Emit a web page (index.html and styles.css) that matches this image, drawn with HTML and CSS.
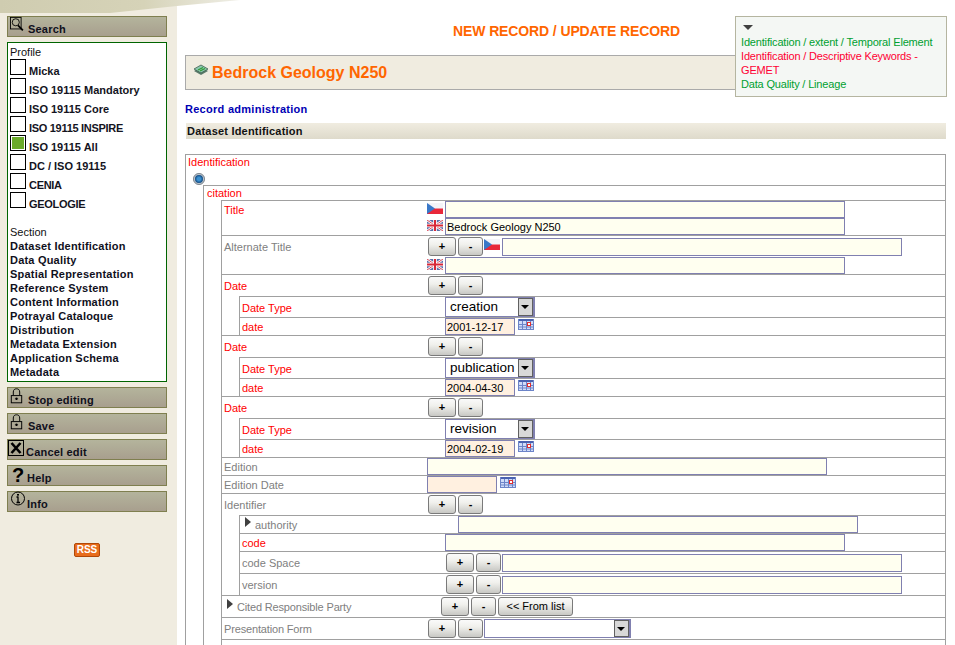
FILE: index.html
```html
<!DOCTYPE html>
<html>
<head>
<meta charset="UTF-8">
<title>Micka - new record</title>
<link rel="stylesheet" href="styles.css">
</head>
<body>

<svg width="0" height="0" class="defs">
	<symbol id="cz" viewBox="0 0 16 11">
		<rect width="16" height="5.5" fill="#f4f4f8"/>
		<rect y="5.5" width="16" height="5.5" fill="#e8283a"/>
		<path d="M0 0L8 5.5L0 11Z" fill="#3a78c8"/>
	</symbol>
	<symbol id="uk" viewBox="0 0 16 11">
		<rect width="16" height="11" fill="#5a6ea8"/>
		<path d="M0 0L16 11M16 0L0 11" stroke="#fff" stroke-width="2.4"/>
		<path d="M0 0L16 11M16 0L0 11" stroke="#d84858" stroke-width="1"/>
		<path d="M8 0V11M0 5.5H16" stroke="#fff" stroke-width="3.6"/>
		<path d="M8 0V11M0 5.5H16" stroke="#d82838" stroke-width="2"/>
	</symbol>
	<symbol id="cal" viewBox="0 0 16 11">
		<rect width="16" height="11" fill="#d0dcf8"/>
		<rect width="16" height="2" fill="#4a62b0"/>
		<path d="M0.5 0V11M4.500 2V11M8.500 2V11M12.500 2V11M15.500 0V11M0 5.500H16M0 8H16M0 10.500H16" stroke="#6c84c8" stroke-width="1" fill="none"/>
		<rect x="9.500" y="3.500" width="3" height="3" fill="#fff" stroke="#e03030"/>
	</symbol>
	<symbol id="lock" viewBox="0 0 16 20">
		<path d="M4 9V5C4 2 6 1 8 1C10 1 12 2 12 5V9" fill="none" stroke="#000" stroke-width="1.200"/>
		<rect x="1.500" y="9.500" width="13" height="9" fill="none" stroke="#000" stroke-width="1.200"/>
		<rect x="7" y="12" width="2" height="3" fill="#000"/>
		<rect x="6" y="13" width="4" height="1" fill="#000"/>
	</symbol>
</svg>

<svg class="banner" width="240" height="14" viewBox="0 0 240 14">
	<defs>
		<linearGradient id="bannerFill" x1="0" y1="0" x2="1" y2="0">
			<stop offset="0" stop-color="#cfccb0"/>
			<stop offset="0.6" stop-color="#d6d3b8"/>
			<stop offset="1" stop-color="#efeee6"/>
		</linearGradient>
	</defs>
	<path d="M0 0H240L177 6L110 13H0Z" fill="url(#bannerFill)"/>
</svg>

<div class="sidebar">
	<a class="side-btn">
		<svg class="icon" width="18" height="17" viewBox="0 0 18 17">
			<rect x="0.5" y="0.5" width="12" height="13" fill="none" stroke="#000"/>
			<circle cx="6.5" cy="6" r="4" fill="none" stroke="#000"/>
			<path d="M9 9.500L14.500 15" stroke="#000" stroke-width="2"/>
		</svg>
		<span>Search</span>
	</a>

	<div class="side-box">
		<div class="side-title">Profile</div>
		<div class="profile"><span class="check"></span>Micka</div>
		<div class="profile"><span class="check"></span>ISO 19115 Mandatory</div>
		<div class="profile"><span class="check"></span>ISO 19115 Core</div>
		<div class="profile caps"><span class="check"></span>ISO 19115 INSPIRE</div>
		<div class="profile"><span class="check checked"></span>ISO 19115 All</div>
		<div class="profile"><span class="check"></span>DC / ISO 19115</div>
		<div class="profile caps"><span class="check"></span>CENIA</div>
		<div class="profile caps"><span class="check"></span>GEOLOGIE</div>

		<div class="side-title section-title">Section</div>
		<a class="section-link">Dataset Identification</a>
		<a class="section-link">Data Quality</a>
		<a class="section-link">Spatial Representation</a>
		<a class="section-link">Reference System</a>
		<a class="section-link">Content Information</a>
		<a class="section-link">Potrayal Cataloque</a>
		<a class="section-link">Distribution</a>
		<a class="section-link">Metadata Extension</a>
		<a class="section-link">Application Schema</a>
		<a class="section-link">Metadata</a>
	</div>

	<a class="side-btn">
		<svg class="lock-icon" viewBox="0 0 16 20"><use href="#lock"/></svg>
		<span>Stop editing</span>
	</a>
	<a class="side-btn">
		<svg class="lock-icon" viewBox="0 0 16 20"><use href="#lock"/></svg>
		<span>Save</span>
	</a>
	<a class="side-btn">
		<svg class="cancel-icon" viewBox="0 0 16 16">
			<rect x="0.5" y="0.5" width="15" height="15" fill="none" stroke="#000"/>
			<path d="M3.500 3L12.500 13M12.500 3L3.500 13" stroke="#000" stroke-width="2.600"/>
		</svg>
		<span class="tight">Cancel edit</span>
	</a>
	<a class="side-btn">
		<span class="glyph">?</span>
		<span class="tight">Help</span>
	</a>
	<a class="side-btn">
		<svg class="icon" width="15" height="15" viewBox="0 0 15 15">
			<circle cx="7.500" cy="7.500" r="6.500" fill="none" stroke="#000"/>
			<path d="M7.500 6V11.500M6 6H8M6 11.500H9.500" stroke="#000" stroke-width="1.300" fill="none"/>
			<rect x="6.500" y="3" width="2" height="1.600" fill="#000"/>
		</svg>
		<span class="tight">Info</span>
	</a>

	<div class="rss-wrap"><span class="rss">RSS</span></div>
</div>

<div class="main">
	<h1 class="page-title">NEW RECORD / UPDATE RECORD</h1>

	<div class="note">
		<span class="note-arrow"></span>
		<div class="ok">Identification / extent / Temporal Element</div>
		<div class="bad">Identification / Descriptive Keywords - GEMET</div>
		<div class="ok">Data Quality / Lineage</div>
	</div>

	<div class="record-head">
		<svg class="layer-icon" width="16" height="12" viewBox="0 0 16 12">
			<path d="M1 7L8 11L15 7L8 3Z" fill="#5a7a6a"/>
			<path d="M1 5L8 9L15 5L8 1Z" fill="#8cc8b0" stroke="#40604f" stroke-width="0.800"/>
			<path d="M5 6L10 3.500M7 7L12 4.500" stroke="#2f9a30" stroke-width="1.200"/>
		</svg>
		Bedrock Geology N250
	</div>

	<a class="admin-link">Record administration</a>
	<div class="section-head">Dataset Identification</div>

	<div class="tree">
		<div class="label req top-label">Identification</div>
		<div class="radio-line"><span class="radio"></span></div>

		<div class="kids">
			<div class="label req head-label">citation</div>

			<div class="kids">
				<div class="row">
					<div class="label req">Title</div>
					<div class="stack">
						<div class="line"><svg class="flag"><use href="#cz"/></svg><input class="field w400" type="text"></div>
						<div class="line"><svg class="flag"><use href="#uk"/></svg><input class="field w400" type="text" value="Bedrock Geology N250"></div>
					</div>
				</div>

				<div class="row">
					<div class="label tall opt">Alternate Title</div>
					<div class="stack">
						<div class="line tall-line">
							<button class="btn plus">+</button><button class="btn minus">-</button>
							<svg class="flag flag-after"><use href="#cz"/></svg><input class="field w400 raised" type="text">
						</div>
						<div class="line"><svg class="flag"><use href="#uk"/></svg><input class="field w400" type="text"></div>
					</div>
				</div>

				<div class="row">
					<div class="label tall req">Date</div>
					<button class="btn plus">+</button><button class="btn minus">-</button>
				</div>
				<div class="kids">
					<div class="row">
						<div class="label mid req">Date Type</div>
						<div class="select w90"><span class="select-text">creation</span><span class="select-arrow"></span></div>
					</div>
					<div class="row">
						<div class="label req">date</div>
						<input class="field date" type="text" value="2001-12-17"><svg class="cal"><use href="#cal"/></svg>
					</div>
				</div>

				<div class="row">
					<div class="label tall req">Date</div>
					<button class="btn plus">+</button><button class="btn minus">-</button>
				</div>
				<div class="kids">
					<div class="row">
						<div class="label mid req">Date Type</div>
						<div class="select w90"><span class="select-text">publication</span><span class="select-arrow"></span></div>
					</div>
					<div class="row">
						<div class="label req">date</div>
						<input class="field date" type="text" value="2004-04-30"><svg class="cal"><use href="#cal"/></svg>
					</div>
				</div>

				<div class="row">
					<div class="label tall req">Date</div>
					<button class="btn plus">+</button><button class="btn minus">-</button>
				</div>
				<div class="kids">
					<div class="row">
						<div class="label mid req">Date Type</div>
						<div class="select w90"><span class="select-text">revision</span><span class="select-arrow"></span></div>
					</div>
					<div class="row">
						<div class="label req">date</div>
						<input class="field date" type="text" value="2004-02-19"><svg class="cal"><use href="#cal"/></svg>
					</div>
				</div>

				<div class="row">
					<div class="label opt">Edition</div>
					<input class="field w400" type="text">
				</div>
				<div class="row">
					<div class="label opt">Edition Date</div>
					<input class="field date" type="text"><svg class="cal"><use href="#cal"/></svg>
				</div>

				<div class="row">
					<div class="label tall opt">Identifier</div>
					<button class="btn plus">+</button><button class="btn minus">-</button>
				</div>
				<div class="kids">
					<div class="row">
						<div class="label opt authority"><span class="tri"></span>authority</div>
						<input class="field w400" type="text">
					</div>
					<div class="row">
						<div class="label req">code</div>
						<input class="field w400" type="text">
					</div>
					<div class="row">
						<div class="label tall opt">code Space</div>
						<button class="btn plus">+</button><button class="btn minus">-</button>
						<input class="field w400 raised after-btns" type="text">
					</div>
					<div class="row">
						<div class="label tall opt">version</div>
						<button class="btn plus">+</button><button class="btn minus">-</button>
						<input class="field w400 raised after-btns" type="text">
					</div>
				</div>

				<div class="row">
					<div class="label tall opt party snug"><span class="tri"></span>Cited Responsible Party</div>
					<button class="btn plus">+</button><button class="btn minus">-</button><button class="btn from-list">&lt;&lt; From list</button>
				</div>
				<div class="row">
					<div class="label tall opt snug">Presentation Form</div>
					<button class="btn plus">+</button><button class="btn minus">-</button>
					<div class="select w147"><span class="select-text"></span><span class="select-arrow"></span></div>
				</div>
				<div class="row row-end"></div>
			</div>
		</div>
	</div>
</div>

</body>
</html>
```

FILE: styles.css
```css
* {
	box-sizing: border-box;
}

html, body {
	height: 100%;
	overflow: hidden;
}

body {
	margin: 0;
	display: flex;
	background-color: #ffffff;
	font-family: "Liberation Sans", Arial, sans-serif;
	font-size: 11px;
}

.defs {
	position: absolute;
}

.banner {
	position: absolute;
	left: 0;
	top: 0;
}

/* left column */

.sidebar {
	width: 177px;
	height: 100%;
	flex: none;
	background-color: #f0ece0;
	padding: 16px 0 0 7px;
}

.side-btn {
	display: flex;
	align-items: flex-start;
	width: 160px;
	height: 21px;
	margin-bottom: 5px;
	padding-left: 2px;
	border: 1px solid #7f7f4f;
	background: linear-gradient(#b4b49c, #a89f8e);
	color: #10101c;
	font-weight: bold;
	letter-spacing: 0.2px;
	cursor: pointer;
}

.side-btn span {
	margin: 5px 0 0 2px;
	line-height: 14px;
}

.side-btn .icon {
	flex: none;
	width: 16px;
	margin-top: -1px;
}

.lock-icon {
	flex: none;
	width: 13px;
	height: 16px;
	margin-right: 3px;
}

.cancel-icon {
	flex: none;
	width: 16px;
	height: 16px;
	margin: 0 1px 0 -2px;
}

.side-btn span.tight {
	margin-left: 1px;
}

.side-btn span.glyph {
	width: 16px;
	margin: 0;
	padding-left: 2px;
	font-size: 20px;
	line-height: 19px;
	color: #000;
}

.side-box {
	width: 160px;
	height: 340px;
	margin-bottom: 5px;
	padding: 2px 0 0 2px;
	border: 1px solid #006400;
	background-color: #ffffff;
}

.side-title {
	height: 14px;
	line-height: 14px;
	color: #111;
}

.section-title {
	margin-top: 14px;
}

.profile {
	display: flex;
	align-items: flex-end;
	height: 19px;
	color: #14141e;
	font-weight: bold;
	line-height: 13px;
}

.caps {
	letter-spacing: -0.3px;
}

.check {
	width: 16px;
	height: 16px;
	margin: 0 3px 3px 0;
	border: 1px solid #000;
	flex: none;
}

.checked {
	background-color: #6aaa2a;
	box-shadow: inset 0 0 0 1px #fff;
}

.section-link {
	display: block;
	height: 14px;
	line-height: 14px;
	color: #10101c;
	font-weight: bold;
	letter-spacing: 0.2px;
}

.rss-wrap {
	width: 160px;
	margin-top: 31px;
	text-align: center;
}

.rss {
	display: inline-block;
	width: 26px;
	height: 14px;
	border: 1px solid #b04808;
	border-radius: 2px;
	background-color: #e86c1c;
	color: #fff;
	font-size: 10px;
	font-weight: bold;
	line-height: 12px;
}

/* right column */

.main {
	position: relative;
	width: 761px;
	margin-left: 8px;
	flex: none;
}

.page-title {
	margin: 22px 0 15px 0;
	padding-left: 2px;
	height: 18px;
	line-height: 18px;
	font-size: 14px;
	letter-spacing: -0.12px;
	text-align: center;
	color: #ff6600;
}

.note {
	position: absolute;
	left: 550px;
	top: 16px;
	width: 212px;
	height: 81px;
	padding: 5px 5px 0 5px;
	border: 1px solid #b5b5a0;
	background-color: #f4f7f4;
	line-height: 14px;
	letter-spacing: -0.17px;
}

.note-arrow {
	display: block;
	width: 0;
	height: 0;
	margin: 3px 0 5px 2px;
	border-style: solid;
	border-width: 5px 5px 0 5px;
	border-color: #404040 transparent transparent transparent;
}

.ok {
	color: #00a030;
}

.bad {
	color: #ff0033;
}

.record-head {
	display: flex;
	align-items: center;
	height: 35px;
	border: 1px solid #aaaaaa;
	background-color: #f0ece0;
	color: #ff6600;
	font-size: 16px;
	font-weight: bold;
}

.layer-icon {
	margin: -6px 3px 0 7px;
}

.admin-link {
	display: block;
	height: 14px;
	margin-top: 12px;
	line-height: 14px;
	color: #0000b4;
	font-weight: bold;
	letter-spacing: 0.28px;
}

.section-head {
	height: 16px;
	margin: 7px 0 15px 1px;
	padding-left: 1px;
	line-height: 16px;
	background: linear-gradient(#f0ece0, #dedacb);
	color: #111;
	font-weight: bold;
	letter-spacing: 0.2px;
}

/* form tree */

.tree {
	border: 1px solid #a0a0a0;
	border-bottom: none;
}

.kids {
	margin-left: 17px;
	border-left: 1px solid #a0a0a0;
	border-top: 1px solid #a0a0a0;
}

.kids > .row:first-child {
	border-top: none;
}

.row {
	display: flex;
	align-items: flex-start;
	border-top: 1px solid #a0a0a0;
}

.row-end {
	height: 6px;
}

.label {
	width: 205px;
	height: 17px;
	padding-left: 2px;
	flex: none;
	line-height: 19px;
}

.label.tall {
	height: 21px;
	line-height: 23px;
}

.label.mid {
	height: 20px;
	line-height: 22px;
}

.snug {
	letter-spacing: -0.16px;
}

.req {
	color: #ff0000;
}

.opt {
	color: #808080;
}

.top-label {
	width: auto;
	height: 15px;
	line-height: 15px;
}

.head-label {
	width: auto;
	height: 14px;
	padding-left: 3px;
	line-height: 15px;
}

.radio-line {
	height: 15px;
	padding: 3px 0 0 7px;
}

.radio {
	display: block;
	width: 12px;
	height: 12px;
	border: 2px solid #c0c8d0;
	border-radius: 50%;
	outline: 1px solid #808890;
	outline-offset: -1px;
	background: radial-gradient(#3a90d0 30%, #104880 70%);
}

.authority {
	width: 218px;
	padding-left: 5px;
}

.party {
	width: 218px;
	padding-left: 5px;
}

.tri {
	display: inline-block;
	width: 0;
	height: 0;
	margin-right: 4px;
	border-style: solid;
	border-width: 5px 0 5px 6px;
	border-color: transparent transparent transparent #404040;
	vertical-align: 2px;
}

.stack {
	display: flex;
	flex-direction: column;
}

.line {
	display: flex;
	align-items: flex-start;
	height: 17px;
}

.tall-line {
	height: 21px;
}

.flag {
	width: 16px;
	height: 11px;
	margin: 2px 2px 0 0;
	flex: none;
}

.flag-after {
	margin: 3px 2px 0 1px;
}

.field {
	display: block;
	height: 17px;
	margin: 0;
	padding: 0 1px;
	border: 1px solid #8080b0;
	border-radius: 0;
	background-color: #fffff0;
	color: #000;
	font-family: "Liberation Sans", Arial, sans-serif;
	font-size: 11px;
	outline: none;
}

.w400 {
	width: 400px;
}

.raised {
	height: 18px;
	margin-top: 2px;
}

.after-btns {
	margin-left: 1px;
}

.date {
	width: 70px;
	background-color: #fff0e0;
}

.cal {
	width: 16px;
	height: 11px;
	margin: 1px 0 0 3px;
	flex: none;
}

.btn {
	height: 19px;
	margin: 1px 0 0 0;
	padding: 0;
	border: 1px solid #7a7a7a;
	border-radius: 3px;
	background: linear-gradient(#fafafa, #f0f0ec 40%, #c8c8c4);
	color: #000;
	font-family: "Liberation Sans", Arial, sans-serif;
	font-size: 11px;
	font-weight: bold;
	line-height: 15px;
}

.plus {
	width: 28px;
	margin-left: 1px;
}

.minus {
	width: 25px;
	margin-left: 2px;
}

.from-list {
	width: 75px;
	margin-left: 2px;
	font-size: 11px;
	font-weight: normal;
}

.select {
	display: flex;
	justify-content: space-between;
	height: 20px;
	border: 1px solid #8080b0;
	border-width: 1px 2px 1px 1px;
	background-color: #fff;
}

.w90 {
	width: 90px;
}

.w147 {
	width: 147px;
	margin: 0 0 0 1px;
	height: 19px;
	margin-top: 1px;
}

.select-text {
	padding-left: 4px;
	color: #000;
	font-size: 13.5px;
	line-height: 18px;
}

.select-arrow {
	position: relative;
	width: 15px;
	flex: none;
	border: 1px solid #606060;
	background-color: #d8d8d8;
}

.select-arrow::after {
	content: "";
	position: absolute;
	left: 2px;
	top: 6px;
	border-style: solid;
	border-width: 4px 4px 0 4px;
	border-color: #000 transparent transparent transparent;
}
```
